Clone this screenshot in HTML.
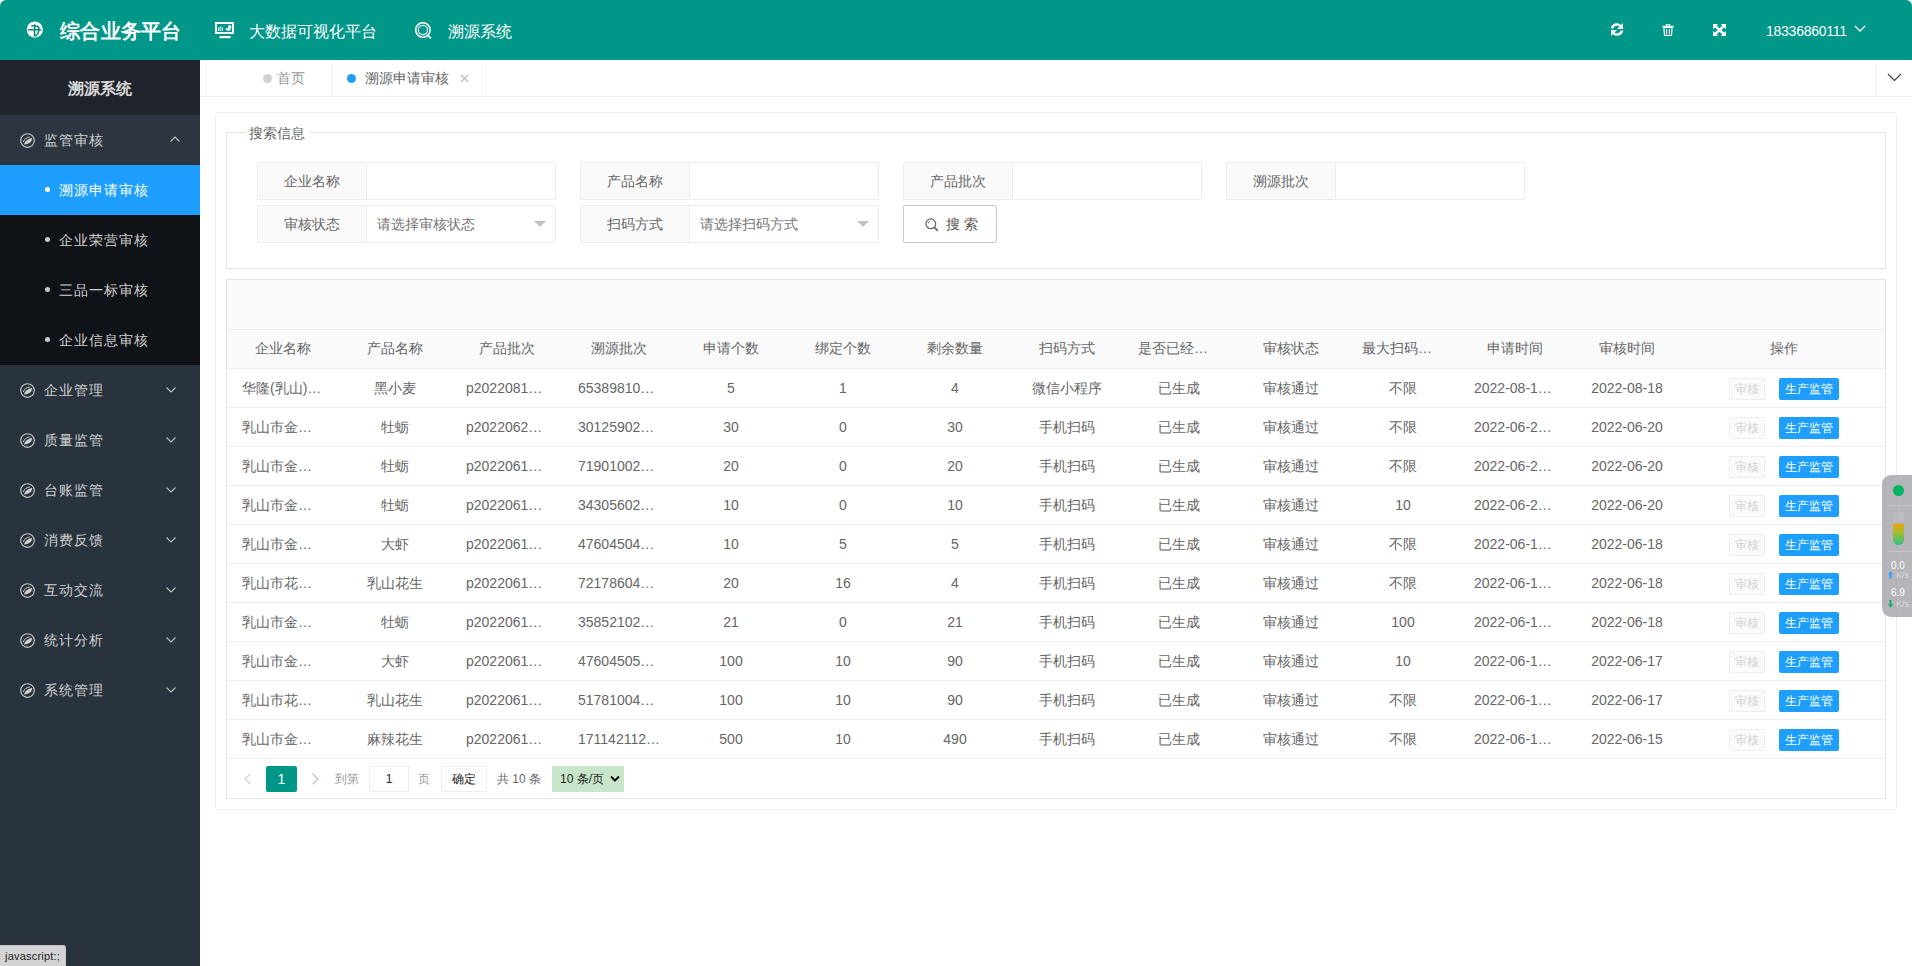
<!DOCTYPE html>
<html><head><meta charset="utf-8">
<style>
*{box-sizing:border-box;margin:0;padding:0}
html,body{width:1912px;height:966px;overflow:hidden;background:#fff;font-family:"Liberation Sans",sans-serif;font-size:14px;color:#666}
.a{position:absolute;white-space:nowrap}
#hdr{position:absolute;left:0;top:0;width:1912px;height:60px;background:#009688;color:#fff;border-radius:6px 6px 0 0}
#hdr .t{position:absolute;top:0;line-height:60px;white-space:nowrap}
#side{position:absolute;left:0;top:60px;width:200px;height:906px;background:#28333e;color:#c2c2c2}
.mi{position:absolute;left:0;width:200px;height:50px}
.mi .ic{position:absolute;left:20px;top:18px;width:15px;height:15px}
.mi .tx{position:absolute;left:44px;top:0;line-height:50px;font-size:14px;letter-spacing:1px;color:#d0d0d0}
.mi .ch{position:absolute;left:170px;top:20px;width:10px;height:6px}
.sub{position:absolute;left:0;width:200px;height:50px}
.sub .dot{position:absolute;left:45px;top:22px;width:5px;height:5px;border-radius:50%;background:#c8c8c8}
.sub .tx{position:absolute;left:59px;top:0;line-height:50px;font-size:14px;letter-spacing:1px;color:#d0d0d0}
#tabs{position:absolute;left:200px;top:60px;width:1712px;height:37px;background:#fff;border-bottom:1px solid #f0f0f0}
.card{position:absolute;left:215px;top:112px;width:1682px;height:698px;border:1px solid #eeeeee;border-radius:4px;background:#fff}

.fs{position:absolute;left:226px;top:132px;width:1660px;height:137px;border:1px solid #e6e6e6;border-top:none}
.fsl{position:absolute;top:132px;height:1px;background:#e6e6e6}
.lbl{position:absolute;width:110px;height:38px;border:1px solid #ededed;background:#fafafa;text-align:center;line-height:36px;font-size:14px;color:#666;border-radius:2px 0 0 2px}
.inp{position:absolute;width:189px;height:38px;border:1px solid #ededed;border-left:none;background:#fff;border-radius:0 2px 2px 0;line-height:36px;font-size:14px;color:#757575;padding-left:10px}
.tri{position:absolute;width:0;height:0;border-left:6px solid transparent;border-right:6px solid transparent;border-top:6px solid #c2c2c2}
.tbl{position:absolute;left:226px;top:279px;width:1660px;height:520px;border:1px solid #e6e6e6}
.th{position:absolute;top:0;height:39px;line-height:39px;text-align:center;font-size:14px;color:#666;overflow:hidden;text-overflow:ellipsis;white-space:nowrap;padding:0 15px}
.row{position:absolute;left:0;width:1658px;height:39px;border-top:1px solid #eeeeee}
.td{position:absolute;top:0;height:38px;line-height:38px;text-align:center;font-size:14px;color:#666;overflow:hidden;text-overflow:ellipsis;white-space:nowrap;padding:0 15px}
.bd{position:absolute;top:9px;width:36px;height:22px;border:1px solid #eeeeee;background:#fbfbfb;color:#d2d2d2;font-size:12px;line-height:20px;text-align:center;border-radius:2px}
.bb{position:absolute;top:9px;width:60px;height:22px;background:#1e9fff;color:#fff;font-size:12px;line-height:22px;text-align:center;border-radius:2px}
</style></head><body>
<div id="hdr">
  <svg class="a" style="left:26px;top:21px" width="17" height="17" viewBox="0 0 17 17"><circle cx="8.8" cy="8.6" r="8.1" fill="#fff"/><path d="M2 8.8h13.2M8.6 3.2v12.4M5.2 4.8l6.6 0.4C13.6 6 13.4 12.6 9.4 15.4" stroke="#0a8a7e" stroke-width="1.6" fill="none"/></svg>
  <div class="t" style="left:60px;top:1px;font-size:20px;font-weight:900;letter-spacing:0.3px">综合业务平台</div>
  <svg class="a" style="left:215px;top:22px" width="20" height="17" viewBox="0 0 20 17"><rect x="1" y="1" width="17" height="10" fill="none" stroke="#fff" stroke-width="2"/><path d="M3.6 9V5.5M5.2 9V4.5M7.2 9V5" stroke="#fff" stroke-width="1"/><path d="M13.2 6.2V3.6A2.6 2.6 0 1 1 10.6 6.2Z" fill="#fff"/><path d="M13.8 5.6V3A2.6 2.6 0 0 1 16.4 5.6Z" fill="#fff"/><rect x="4.5" y="14" width="11" height="2.2" fill="#fff"/></svg>
  <div class="t" style="left:249px;top:2px;font-size:16px">大数据可视化平台</div>
  <svg class="a" style="left:413px;top:20px" width="20" height="20" viewBox="0 0 20 20"><circle cx="9.9" cy="10" r="7.2" fill="none" stroke="#fff" stroke-width="1.6"/><circle cx="9.9" cy="10" r="4.6" fill="none" stroke="#fff" stroke-width="1.1"/><path d="M14.8 15.2l3.2 3.2" stroke="#fff" stroke-width="1.6"/></svg>
  <div class="t" style="left:448px;top:2px;font-size:16px">溯源系统</div>
  <svg class="a" style="left:1610px;top:23px" width="14" height="13" viewBox="0 0 14 13"><path d="M2 5.5A5 5 0 0 1 11 3.5" fill="none" stroke="#fff" stroke-width="2.4"/><path d="M13 0v6h-6z" fill="#fff"/><path d="M12 7.5A5 5 0 0 1 3 9.5" fill="none" stroke="#fff" stroke-width="2.4"/><path d="M1 13v-6h6z" fill="#fff"/></svg>
  <svg class="a" style="left:1662px;top:24px" width="12" height="12" viewBox="0 0 12 12"><path d="M4.3 2V0.7h3.4V2" fill="none" stroke="#fff" stroke-width="1.1"/><rect x="0.3" y="1.8" width="11.4" height="1.4" fill="#fff"/><path d="M1.9 3.5h8.2l-0.6 7.9h-7z" fill="none" stroke="#fff" stroke-width="1.2"/><path d="M4.6 5v5M7.4 5v5" stroke="#fff" stroke-width="1.1"/></svg>
  <svg class="a" style="left:1713px;top:24px" width="13" height="12" viewBox="0 0 13 12"><path d="M2.2 2L10.8 10M10.8 2L2.2 10" stroke="#fff" stroke-width="2.4"/><path d="M0 0h5.2L0 5z M13 0v5L7.8 0z M0 12V7l5.2 5z M13 12H7.8L13 7z" fill="#fff"/></svg>
  <div class="t" style="left:1766px;top:1px;font-size:14px;letter-spacing:-0.25px">18336860111</div>
  <svg class="a" style="left:1854px;top:25px" width="12" height="8" viewBox="0 0 12 8"><path d="M1 1l5 5 5-5" fill="none" stroke="#fff" stroke-width="1.3"/></svg>
</div>
<div id="side">
  <div class="a" style="left:0;top:0;width:200px;height:55px;background:#1f242c;line-height:57px;text-align:center;font-size:16px;font-weight:bold;color:#d8d8d8">溯源系统</div>
  <div class="mi" style="top:55px;background:#2c3540"><svg class="ic" viewBox="0 0 15 15"><circle cx="7.5" cy="7.5" r="6.8" fill="none" stroke="#c8c8c8" stroke-width="1.15"/><path d="M4 11.4C4.8 8.2 7.8 5.9 12.3 5.1 11.9 9 9.2 11.6 4 11.4Z" fill="#cfcfcf"/><path d="M3.3 9C4.3 6 6.6 4.2 9.8 4" stroke="#c8c8c8" stroke-width="1" fill="none"/></svg><div class="tx">监管审核</div><svg class="ch" style="left:170px;top:21px" viewBox="0 0 10 6"><path d="M0.5 5.5l4.5-4.5 4.5 4.5" fill="none" stroke="#c2c2c2" stroke-width="1.1"/></svg></div>
  <div class="a" style="left:0;top:105px;width:200px;height:200px;background:#0f1216"></div>
  <div class="sub" style="top:105px;background:#1e9fff"><div class="dot" style="background:#fff"></div><div class="tx" style="color:#fff">溯源申请审核</div></div>
  <div class="sub" style="top:155px"><div class="dot"></div><div class="tx">企业荣营审核</div></div>
  <div class="sub" style="top:205px"><div class="dot"></div><div class="tx">三品一标审核</div></div>
  <div class="sub" style="top:255px"><div class="dot"></div><div class="tx">企业信息审核</div></div>
  <div class="mi" style="top:305px"><svg class="ic" viewBox="0 0 15 15"><circle cx="7.5" cy="7.5" r="6.8" fill="none" stroke="#c8c8c8" stroke-width="1.15"/><path d="M4 11.4C4.8 8.2 7.8 5.9 12.3 5.1 11.9 9 9.2 11.6 4 11.4Z" fill="#cfcfcf"/><path d="M3.3 9C4.3 6 6.6 4.2 9.8 4" stroke="#c8c8c8" stroke-width="1" fill="none"/></svg><div class="tx">企业管理</div><svg class="ch" style="left:166px;top:22px" viewBox="0 0 10 6"><path d="M0.5 0.5l4.5 4.5 4.5-4.5" fill="none" stroke="#c2c2c2" stroke-width="1.1"/></svg></div>
  <div class="mi" style="top:355px"><svg class="ic" viewBox="0 0 15 15"><circle cx="7.5" cy="7.5" r="6.8" fill="none" stroke="#c8c8c8" stroke-width="1.15"/><path d="M4 11.4C4.8 8.2 7.8 5.9 12.3 5.1 11.9 9 9.2 11.6 4 11.4Z" fill="#cfcfcf"/><path d="M3.3 9C4.3 6 6.6 4.2 9.8 4" stroke="#c8c8c8" stroke-width="1" fill="none"/></svg><div class="tx">质量监管</div><svg class="ch" style="left:166px;top:22px" viewBox="0 0 10 6"><path d="M0.5 0.5l4.5 4.5 4.5-4.5" fill="none" stroke="#c2c2c2" stroke-width="1.1"/></svg></div>
  <div class="mi" style="top:405px"><svg class="ic" viewBox="0 0 15 15"><circle cx="7.5" cy="7.5" r="6.8" fill="none" stroke="#c8c8c8" stroke-width="1.15"/><path d="M4 11.4C4.8 8.2 7.8 5.9 12.3 5.1 11.9 9 9.2 11.6 4 11.4Z" fill="#cfcfcf"/><path d="M3.3 9C4.3 6 6.6 4.2 9.8 4" stroke="#c8c8c8" stroke-width="1" fill="none"/></svg><div class="tx">台账监管</div><svg class="ch" style="left:166px;top:22px" viewBox="0 0 10 6"><path d="M0.5 0.5l4.5 4.5 4.5-4.5" fill="none" stroke="#c2c2c2" stroke-width="1.1"/></svg></div>
  <div class="mi" style="top:455px"><svg class="ic" viewBox="0 0 15 15"><circle cx="7.5" cy="7.5" r="6.8" fill="none" stroke="#c8c8c8" stroke-width="1.15"/><path d="M4 11.4C4.8 8.2 7.8 5.9 12.3 5.1 11.9 9 9.2 11.6 4 11.4Z" fill="#cfcfcf"/><path d="M3.3 9C4.3 6 6.6 4.2 9.8 4" stroke="#c8c8c8" stroke-width="1" fill="none"/></svg><div class="tx">消费反馈</div><svg class="ch" style="left:166px;top:22px" viewBox="0 0 10 6"><path d="M0.5 0.5l4.5 4.5 4.5-4.5" fill="none" stroke="#c2c2c2" stroke-width="1.1"/></svg></div>
  <div class="mi" style="top:505px"><svg class="ic" viewBox="0 0 15 15"><circle cx="7.5" cy="7.5" r="6.8" fill="none" stroke="#c8c8c8" stroke-width="1.15"/><path d="M4 11.4C4.8 8.2 7.8 5.9 12.3 5.1 11.9 9 9.2 11.6 4 11.4Z" fill="#cfcfcf"/><path d="M3.3 9C4.3 6 6.6 4.2 9.8 4" stroke="#c8c8c8" stroke-width="1" fill="none"/></svg><div class="tx">互动交流</div><svg class="ch" style="left:166px;top:22px" viewBox="0 0 10 6"><path d="M0.5 0.5l4.5 4.5 4.5-4.5" fill="none" stroke="#c2c2c2" stroke-width="1.1"/></svg></div>
  <div class="mi" style="top:555px"><svg class="ic" viewBox="0 0 15 15"><circle cx="7.5" cy="7.5" r="6.8" fill="none" stroke="#c8c8c8" stroke-width="1.15"/><path d="M4 11.4C4.8 8.2 7.8 5.9 12.3 5.1 11.9 9 9.2 11.6 4 11.4Z" fill="#cfcfcf"/><path d="M3.3 9C4.3 6 6.6 4.2 9.8 4" stroke="#c8c8c8" stroke-width="1" fill="none"/></svg><div class="tx">统计分析</div><svg class="ch" style="left:166px;top:22px" viewBox="0 0 10 6"><path d="M0.5 0.5l4.5 4.5 4.5-4.5" fill="none" stroke="#c2c2c2" stroke-width="1.1"/></svg></div>
  <div class="mi" style="top:605px"><svg class="ic" viewBox="0 0 15 15"><circle cx="7.5" cy="7.5" r="6.8" fill="none" stroke="#c8c8c8" stroke-width="1.15"/><path d="M4 11.4C4.8 8.2 7.8 5.9 12.3 5.1 11.9 9 9.2 11.6 4 11.4Z" fill="#cfcfcf"/><path d="M3.3 9C4.3 6 6.6 4.2 9.8 4" stroke="#c8c8c8" stroke-width="1" fill="none"/></svg><div class="tx">系统管理</div><svg class="ch" style="left:166px;top:22px" viewBox="0 0 10 6"><path d="M0.5 0.5l4.5 4.5 4.5-4.5" fill="none" stroke="#c2c2c2" stroke-width="1.1"/></svg></div>
</div>
<div id="tabs">
  <div class="a" style="left:6px;top:4px;width:1px;height:32px;background:#f3f3f3"></div>
  <div class="a" style="left:131px;top:4px;width:1px;height:32px;background:#f3f3f3"></div>
  <div class="a" style="left:285px;top:4px;width:1px;height:32px;background:#f3f3f3"></div>
  <div class="a" style="left:63px;top:14px;width:9px;height:9px;border-radius:50%;background:#d2d2d2"></div>
  <div class="a" style="left:77px;top:0;line-height:36px;font-size:14px;color:#999">首页</div>
  <div class="a" style="left:147px;top:14px;width:9px;height:9px;border-radius:50%;background:#1e9fff"></div>
  <div class="a" style="left:165px;top:0;line-height:36px;font-size:14px;color:#666">溯源申请审核</div>
  <svg class="a" style="left:260px;top:14px" width="9" height="9" viewBox="0 0 9 9"><path d="M1 1l7 7M8 1l-7 7" stroke="#bbb" stroke-width="1.1"/></svg>
  <div class="a" style="left:1676px;top:4px;width:1px;height:32px;background:#f3f3f3"></div>
  <svg class="a" style="left:1687px;top:13px" width="15" height="9" viewBox="0 0 15 9"><path d="M1 1l6.5 6.5 6.5-6.5" fill="none" stroke="#444" stroke-width="1.2"/></svg>
</div>
<div class="card"></div>
<div class="fs"></div>
<div class="fsl" style="left:226px;width:20px"></div>
<div class="fsl" style="left:309px;width:1577px"></div>
<div class="a" style="left:249px;top:124px;line-height:18px;font-size:14px;color:#666">搜索信息</div>
<div class="lbl" style="left:257px;top:162px">企业名称</div><div class="inp" style="left:367px;top:162px"></div>
<div class="lbl" style="left:580px;top:162px">产品名称</div><div class="inp" style="left:690px;top:162px"></div>
<div class="lbl" style="left:903px;top:162px">产品批次</div><div class="inp" style="left:1013px;top:162px"></div>
<div class="lbl" style="left:1226px;top:162px">溯源批次</div><div class="inp" style="left:1336px;top:162px"></div>
<div class="lbl" style="left:257px;top:205px">审核状态</div><div class="inp" style="left:367px;top:205px">请选择审核状态</div><div class="tri" style="left:534px;top:221px"></div>
<div class="lbl" style="left:580px;top:205px">扫码方式</div><div class="inp" style="left:690px;top:205px">请选择扫码方式</div><div class="tri" style="left:857px;top:221px"></div>
<div class="a" style="left:903px;top:205px;width:94px;height:38px;border:1px solid #c9c9c9;border-radius:2px;background:#fff"></div>
<svg class="a" style="left:925px;top:218px" width="14" height="14" viewBox="0 0 14 14"><circle cx="5.8" cy="5.8" r="4.9" fill="none" stroke="#666" stroke-width="1.2"/><path d="M3.2 5.5a2.6 2.6 0 0 1 1.6-2.2" fill="none" stroke="#666" stroke-width="0.9"/><path d="M9.4 9.4l3.4 3.4" stroke="#666" stroke-width="1.8"/></svg>
<div class="a" style="left:946px;top:205px;line-height:38px;font-size:14px;color:#555">搜 索</div>
<div class="tbl">
<div class="a" style="left:0;top:0;width:1658px;height:49px;background:#fafafa"></div>
<div class="a" style="left:0;top:49px;width:1658px;height:39px;background:#fafafa;border-top:1px solid #eeeeee"></div>
<div class="th" style="left:0px;top:49px;width:112px">企业名称</div><div class="th" style="left:112px;top:49px;width:112px">产品名称</div><div class="th" style="left:224px;top:49px;width:112px">产品批次</div><div class="th" style="left:336px;top:49px;width:112px">溯源批次</div><div class="th" style="left:448px;top:49px;width:112px">申请个数</div><div class="th" style="left:560px;top:49px;width:112px">绑定个数</div><div class="th" style="left:672px;top:49px;width:112px">剩余数量</div><div class="th" style="left:784px;top:49px;width:112px">扫码方式</div><div class="th" style="left:896px;top:49px;width:112px">是否已经生成</div><div class="th" style="left:1008px;top:49px;width:112px">审核状态</div><div class="th" style="left:1120px;top:49px;width:112px">最大扫码次数</div><div class="th" style="left:1232px;top:49px;width:112px">申请时间</div><div class="th" style="left:1344px;top:49px;width:112px">审核时间</div><div class="th" style="left:1456px;top:49px;width:202px">操作</div>
<div class="row" style="top:88px"><div class="td" style="left:0px;width:112px">华隆(乳山)食品有限公司</div><div class="td" style="left:112px;width:112px">黑小麦</div><div class="td" style="left:224px;width:112px">p20220818001</div><div class="td" style="left:336px;width:112px">653898101234</div><div class="td" style="left:448px;width:112px">5</div><div class="td" style="left:560px;width:112px">1</div><div class="td" style="left:672px;width:112px">4</div><div class="td" style="left:784px;width:112px">微信小程序</div><div class="td" style="left:896px;width:112px">已生成</div><div class="td" style="left:1008px;width:112px">审核通过</div><div class="td" style="left:1120px;width:112px">不限</div><div class="td" style="left:1232px;width:112px">2022-08-18 10:00:00</div><div class="td" style="left:1344px;width:112px">2022-08-18</div><div class="bd" style="left:1502px">审核</div><div class="bb" style="left:1552px">生产监管</div></div>
<div class="row" style="top:127px"><div class="td" style="left:0px;width:112px">乳山市金海水产</div><div class="td" style="left:112px;width:112px">牡蛎</div><div class="td" style="left:224px;width:112px">p20220620001</div><div class="td" style="left:336px;width:112px">301259021234</div><div class="td" style="left:448px;width:112px">30</div><div class="td" style="left:560px;width:112px">0</div><div class="td" style="left:672px;width:112px">30</div><div class="td" style="left:784px;width:112px">手机扫码</div><div class="td" style="left:896px;width:112px">已生成</div><div class="td" style="left:1008px;width:112px">审核通过</div><div class="td" style="left:1120px;width:112px">不限</div><div class="td" style="left:1232px;width:112px">2022-06-20 10:00</div><div class="td" style="left:1344px;width:112px">2022-06-20</div><div class="bd" style="left:1502px">审核</div><div class="bb" style="left:1552px">生产监管</div></div>
<div class="row" style="top:166px"><div class="td" style="left:0px;width:112px">乳山市金海水产</div><div class="td" style="left:112px;width:112px">牡蛎</div><div class="td" style="left:224px;width:112px">p20220619001</div><div class="td" style="left:336px;width:112px">719010021234</div><div class="td" style="left:448px;width:112px">20</div><div class="td" style="left:560px;width:112px">0</div><div class="td" style="left:672px;width:112px">20</div><div class="td" style="left:784px;width:112px">手机扫码</div><div class="td" style="left:896px;width:112px">已生成</div><div class="td" style="left:1008px;width:112px">审核通过</div><div class="td" style="left:1120px;width:112px">不限</div><div class="td" style="left:1232px;width:112px">2022-06-20 10:00</div><div class="td" style="left:1344px;width:112px">2022-06-20</div><div class="bd" style="left:1502px">审核</div><div class="bb" style="left:1552px">生产监管</div></div>
<div class="row" style="top:205px"><div class="td" style="left:0px;width:112px">乳山市金海水产</div><div class="td" style="left:112px;width:112px">牡蛎</div><div class="td" style="left:224px;width:112px">p20220619002</div><div class="td" style="left:336px;width:112px">343056021234</div><div class="td" style="left:448px;width:112px">10</div><div class="td" style="left:560px;width:112px">0</div><div class="td" style="left:672px;width:112px">10</div><div class="td" style="left:784px;width:112px">手机扫码</div><div class="td" style="left:896px;width:112px">已生成</div><div class="td" style="left:1008px;width:112px">审核通过</div><div class="td" style="left:1120px;width:112px">10</div><div class="td" style="left:1232px;width:112px">2022-06-20 10:00</div><div class="td" style="left:1344px;width:112px">2022-06-20</div><div class="bd" style="left:1502px">审核</div><div class="bb" style="left:1552px">生产监管</div></div>
<div class="row" style="top:244px"><div class="td" style="left:0px;width:112px">乳山市金海水产</div><div class="td" style="left:112px;width:112px">大虾</div><div class="td" style="left:224px;width:112px">p20220618001</div><div class="td" style="left:336px;width:112px">476045041234</div><div class="td" style="left:448px;width:112px">10</div><div class="td" style="left:560px;width:112px">5</div><div class="td" style="left:672px;width:112px">5</div><div class="td" style="left:784px;width:112px">手机扫码</div><div class="td" style="left:896px;width:112px">已生成</div><div class="td" style="left:1008px;width:112px">审核通过</div><div class="td" style="left:1120px;width:112px">不限</div><div class="td" style="left:1232px;width:112px">2022-06-18 10:00</div><div class="td" style="left:1344px;width:112px">2022-06-18</div><div class="bd" style="left:1502px">审核</div><div class="bb" style="left:1552px">生产监管</div></div>
<div class="row" style="top:283px"><div class="td" style="left:0px;width:112px">乳山市花生合作社</div><div class="td" style="left:112px;width:112px">乳山花生</div><div class="td" style="left:224px;width:112px">p20220618002</div><div class="td" style="left:336px;width:112px">721786041234</div><div class="td" style="left:448px;width:112px">20</div><div class="td" style="left:560px;width:112px">16</div><div class="td" style="left:672px;width:112px">4</div><div class="td" style="left:784px;width:112px">手机扫码</div><div class="td" style="left:896px;width:112px">已生成</div><div class="td" style="left:1008px;width:112px">审核通过</div><div class="td" style="left:1120px;width:112px">不限</div><div class="td" style="left:1232px;width:112px">2022-06-18 10:00</div><div class="td" style="left:1344px;width:112px">2022-06-18</div><div class="bd" style="left:1502px">审核</div><div class="bb" style="left:1552px">生产监管</div></div>
<div class="row" style="top:322px"><div class="td" style="left:0px;width:112px">乳山市金海水产</div><div class="td" style="left:112px;width:112px">牡蛎</div><div class="td" style="left:224px;width:112px">p20220618003</div><div class="td" style="left:336px;width:112px">358521021234</div><div class="td" style="left:448px;width:112px">21</div><div class="td" style="left:560px;width:112px">0</div><div class="td" style="left:672px;width:112px">21</div><div class="td" style="left:784px;width:112px">手机扫码</div><div class="td" style="left:896px;width:112px">已生成</div><div class="td" style="left:1008px;width:112px">审核通过</div><div class="td" style="left:1120px;width:112px">100</div><div class="td" style="left:1232px;width:112px">2022-06-18 10:00</div><div class="td" style="left:1344px;width:112px">2022-06-18</div><div class="bd" style="left:1502px">审核</div><div class="bb" style="left:1552px">生产监管</div></div>
<div class="row" style="top:361px"><div class="td" style="left:0px;width:112px">乳山市金海水产</div><div class="td" style="left:112px;width:112px">大虾</div><div class="td" style="left:224px;width:112px">p20220617001</div><div class="td" style="left:336px;width:112px">476045051234</div><div class="td" style="left:448px;width:112px">100</div><div class="td" style="left:560px;width:112px">10</div><div class="td" style="left:672px;width:112px">90</div><div class="td" style="left:784px;width:112px">手机扫码</div><div class="td" style="left:896px;width:112px">已生成</div><div class="td" style="left:1008px;width:112px">审核通过</div><div class="td" style="left:1120px;width:112px">10</div><div class="td" style="left:1232px;width:112px">2022-06-17 10:00</div><div class="td" style="left:1344px;width:112px">2022-06-17</div><div class="bd" style="left:1502px">审核</div><div class="bb" style="left:1552px">生产监管</div></div>
<div class="row" style="top:400px"><div class="td" style="left:0px;width:112px">乳山市花生合作社</div><div class="td" style="left:112px;width:112px">乳山花生</div><div class="td" style="left:224px;width:112px">p20220617002</div><div class="td" style="left:336px;width:112px">517810041234</div><div class="td" style="left:448px;width:112px">100</div><div class="td" style="left:560px;width:112px">10</div><div class="td" style="left:672px;width:112px">90</div><div class="td" style="left:784px;width:112px">手机扫码</div><div class="td" style="left:896px;width:112px">已生成</div><div class="td" style="left:1008px;width:112px">审核通过</div><div class="td" style="left:1120px;width:112px">不限</div><div class="td" style="left:1232px;width:112px">2022-06-17 10:00</div><div class="td" style="left:1344px;width:112px">2022-06-17</div><div class="bd" style="left:1502px">审核</div><div class="bb" style="left:1552px">生产监管</div></div>
<div class="row" style="top:439px"><div class="td" style="left:0px;width:112px">乳山市金海水产</div><div class="td" style="left:112px;width:112px">麻辣花生</div><div class="td" style="left:224px;width:112px">p20220615001</div><div class="td" style="left:336px;width:112px">1711421121234</div><div class="td" style="left:448px;width:112px">500</div><div class="td" style="left:560px;width:112px">10</div><div class="td" style="left:672px;width:112px">490</div><div class="td" style="left:784px;width:112px">手机扫码</div><div class="td" style="left:896px;width:112px">已生成</div><div class="td" style="left:1008px;width:112px">审核通过</div><div class="td" style="left:1120px;width:112px">不限</div><div class="td" style="left:1232px;width:112px">2022-06-15 10:00</div><div class="td" style="left:1344px;width:112px">2022-06-15</div><div class="bd" style="left:1502px">审核</div><div class="bb" style="left:1552px">生产监管</div></div>
<div class="row" style="top:478px"></div>
</div>


<svg class="a" style="left:243px;top:773px" width="9" height="12" viewBox="0 0 9 12"><path d="M7.5 0.8L2 6l5.5 5.2" fill="none" stroke="#d2d2d2" stroke-width="1.2"/></svg>
<div class="a" style="left:266px;top:766px;width:31px;height:26px;background:#009688;border-radius:2px;color:#fff;text-align:center;line-height:26px;font-size:14px">1</div>
<svg class="a" style="left:311px;top:773px" width="9" height="12" viewBox="0 0 9 12"><path d="M1.5 0.8L7 6l-5.5 5.2" fill="none" stroke="#c2c2c2" stroke-width="1.2"/></svg>
<div class="a" style="left:335px;top:766px;line-height:26px;font-size:12px;color:#999">到第</div>
<div class="a" style="left:369px;top:766px;width:40px;height:26px;border:1px solid #eeeeee;text-align:center;line-height:24px;font-size:13px;color:#333">1</div>
<div class="a" style="left:418px;top:766px;line-height:26px;font-size:12px;color:#999">页</div>
<div class="a" style="left:441px;top:766px;width:46px;height:26px;border:1px solid #eeeeee;text-align:center;line-height:25px;font-size:12px;color:#222;font-weight:500">确定</div>
<div class="a" style="left:497px;top:766px;line-height:26px;font-size:12px;color:#666">共 10 条</div>
<div class="a" style="left:552px;top:766px;width:72px;height:26px;background:#c8e6c9;line-height:26px;font-size:12px;color:#222;padding-left:8px">10 条/页</div>
<svg class="a" style="left:610px;top:775px" width="10" height="8" viewBox="0 0 10 8"><path d="M1 1.5l4 4 4-4" fill="none" stroke="#111" stroke-width="2"/></svg>

<div class="a" style="left:1882px;top:475px;width:40px;height:142px;border-radius:9px;background:rgba(160,160,166,0.78)"></div>
<div class="a" style="left:1893px;top:485px;width:11px;height:11px;border-radius:50%;background:#00b464"></div>
<div class="a" style="left:1888px;top:505px;width:24px;height:1px;background:rgba(255,255,255,0.25)"></div>
<div class="a" style="left:1893px;top:512px;width:11px;height:33px;border-radius:2px 2px 6px 6px;background:linear-gradient(rgba(200,200,220,0.35) 0,rgba(200,200,220,0.35) 32%,#f0a000 38%,#a0c020 62%,#20c080 100%);opacity:0.9"></div>
<div class="a" style="left:1888px;top:551px;width:24px;height:1px;background:rgba(255,255,255,0.25)"></div>
<div class="a" style="left:1891px;top:560px;line-height:12px;font-size:10px;color:#fff">0.0</div>
<div class="a" style="left:1888px;top:571px;width:5px;height:8px;background:#3aa0ff;clip-path:polygon(50% 0,100% 50%,70% 50%,70% 100%,30% 100%,30% 50%,0 50%)"></div>
<div class="a" style="left:1896px;top:570px;line-height:10px;font-size:9px;color:#ddd">K/s</div>
<div class="a" style="left:1891px;top:587px;line-height:12px;font-size:10px;color:#fff">6.9</div>
<div class="a" style="left:1888px;top:600px;width:5px;height:8px;background:#10b060;clip-path:polygon(30% 0,70% 0,70% 50%,100% 50%,50% 100%,0 50%,30% 50%)"></div>
<div class="a" style="left:1896px;top:599px;line-height:10px;font-size:9px;color:#ddd">K/s</div>
<div class="a" style="left:0;top:945px;width:66px;height:21px;background:#d4d4d4;border-top-right-radius:3px;border:1px solid #c4c4c4;border-left:none;border-bottom:none;font-size:11px;line-height:20px;color:#222;padding-left:5px;letter-spacing:0.2px">javascript:;</div>
</body></html>
